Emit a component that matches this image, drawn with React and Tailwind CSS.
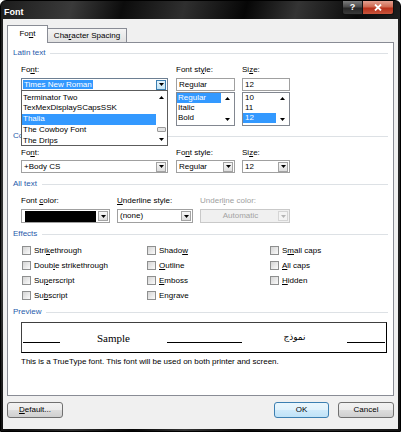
import React from "react";

const Tri = ({ up, color = "#000" }) => (
  <svg width="5" height="3" viewBox="0 0 5 3" className="block">
    <path d={up ? "M0 3h5L2.5 0z" : "M0 0h5L2.5 3z"} fill={color} />
  </svg>
);

const U = ({ children }) => <span className="underline underline-offset-[1px]">{children}</span>;

const DropBtn = ({ kind }) => {
  const cls =
    kind === "active"
      ? "border-[#3c7fb1] bg-[linear-gradient(to_bottom,#e5f4fc,#c4e5f6)]"
      : kind === "disabled"
      ? "border-[#d5d5d5] bg-[#f4f4f4]"
      : "border-[#a3a3a3] bg-[linear-gradient(to_bottom,#f7f7f7,#dedede)]";
  return (
    <div className={`w-[10px] h-[10px] flex items-center justify-center border ${cls}`}>
      <Tri color={kind === "disabled" ? "#b5b5b5" : "#000"} />
    </div>
  );
};

const Header = ({ children }) => (
  <div className="flex items-center h-[12px] pl-[5px] pr-[5px]">
    <span className="text-[#1f5bab] leading-none whitespace-nowrap">{children}</span>
    <div className="flex-1 h-px bg-[#dde1e5] ml-[5px]" />
  </div>
);

const Select = ({ w, children, kind }) => (
  <div
    className={`${w} h-full border flex items-center justify-between pl-[2px] pr-[1px] ${
      kind === "disabled" ? "border-[#c9c9c9] bg-[#f0f0f0]" : "border-[#a0a0a0] bg-white"
    }`}
  >
    {children}
    <DropBtn kind={kind} />
  </div>
);

const Check = ({ children }) => (
  <div className="flex items-center h-[15px] gap-[3px]">
    <div className="w-[9px] h-[9px] border border-[#8e8f8f] bg-[linear-gradient(135deg,#d4d4d4,#fbfbfb)]" />
    <span className="leading-none whitespace-nowrap">{children}</span>
  </div>
);

const Btn = ({ children }) => (
  <div className="w-[56px] h-[16px] rounded-[3px] border border-[#707070] bg-[linear-gradient(to_bottom,#f2f2f2_0%,#ebebeb_50%,#dddddd_51%,#cfcfcf_100%)] flex items-center justify-center leading-none">
    {children}
  </div>
);

const fontItems = ["Terminator Two", "TexMexDisplaySCapsSSK", "Thalia", "The Cowboy Font", "The Drips"];

export default function App() {
  return (
    <div className="w-[404px] h-[442px] bg-white font-['Liberation_Sans',Arial,sans-serif] text-[8px] text-black">
      <div className="w-[401px] h-[432px] flex flex-col border border-black rounded-t-[6px] bg-[linear-gradient(105deg,#1c1c1c_0%,#3a3a3a_14%,#0c0c0c_24%,#2f2f2f_36%,#060606_48%,#343434_58%,#0a0a0a_70%,#2c2c2c_84%,#141414_100%)]">
        {/* Title bar */}
        <div className="h-[18px] flex items-start justify-between">
          <div className="pl-[3px] pt-[7px] text-white font-bold text-[9px] leading-none">Font</div>
          <div className="flex mr-[6px] rounded-b-[3px] border border-t-0 border-[#111] overflow-hidden">
            <div className="w-[20px] h-[13px] flex items-center justify-center text-white font-bold text-[9px] leading-none bg-[linear-gradient(to_bottom,#7b7b7b_0%,#4a4a4a_45%,#262626_55%,#3a3a3a_100%)] border-r border-[#111]">
              ?
            </div>
            <div className="w-[30px] h-[13px] flex items-center justify-center bg-[linear-gradient(to_bottom,#e3a090_0%,#cf6a52_45%,#b8301a_55%,#c8553c_100%)]">
              <svg width="8" height="7" viewBox="0 0 8 7">
                <path d="M1 0.5L7 6.5M7 0.5L1 6.5" stroke="#fff" strokeWidth="1.8" />
              </svg>
            </div>
          </div>
        </div>

        {/* Body */}
        <div className="flex-1 mx-[2px] mb-[2px] bg-[#f0f0f0] flex flex-col px-[4px] pt-[6px]">
          {/* Tabs */}
          <div className="h-[17px] flex items-start">
            <div className="relative z-10 w-[41px] h-[18px] bg-white border border-b-0 border-[#898c95] flex items-center justify-center leading-none pb-[1px]">
              Fo<U>n</U>t
            </div>
            <div className="mt-[3px] w-[79px] h-[14px] border border-b-0 border-l-0 border-[#898c95] bg-[linear-gradient(to_bottom,#f4f4f4,#e1e1e1)] flex items-center justify-center leading-none">
              Cha<U>r</U>acter Spacing
            </div>
          </div>

          {/* Panel */}
          <div className="h-[354px] bg-white border border-[#898c95] flex flex-col pt-[4px]">
            <Header>Latin text</Header>
            <div className="mt-[6px] flex pl-[13px] h-[10px] leading-[10px]">
              <div className="w-[147px]">Fo<U>n</U>t:</div>
              <div className="w-[59px] ml-[8px]">Font st<U>y</U>le:</div>
              <div className="w-[48px] ml-[7px]">Si<U>z</U>e:</div>
            </div>
            <div className="mt-[3px] flex pl-[13px] h-[13px]">
              <div className="relative w-[147px] h-full border border-[#6d7f92] bg-white flex items-center justify-between pl-[1px] pr-[1px]">
                <span className="bg-[#3399ff] text-white leading-[9px] px-[1px]">Times New Roman</span>
                <DropBtn kind="active" />
                <div className="absolute left-[-1px] top-[11px] w-[147px] h-[56px] z-20 border border-[#5c5c5c] bg-white flex overflow-hidden">
                  <div className="flex-1 pt-[1.5px]">
                    {fontItems.map((f) => (
                      <div
                        key={f}
                        className={`h-[10.75px] leading-[10.75px] pl-[1px] whitespace-nowrap ${
                          f === "Thalia" ? "bg-[#3399ff] text-white" : ""
                        }`}
                      >
                        {f}
                      </div>
                    ))}
                  </div>
                  <div className="w-[11px] flex flex-col items-center">
                    <div className="h-[13px] flex items-center justify-center">
                      <Tri up />
                    </div>
                    <div className="h-[23px]" />
                    <div className="w-[9px] h-[5px] border border-[#9a9a9a] bg-[#e4e4e4] rounded-[1px]" />
                    <div className="flex-1" />
                    <div className="h-[12px] flex items-center justify-center">
                      <Tri />
                    </div>
                  </div>
                </div>
              </div>
              <div className="w-[59px] ml-[8px] h-full border border-[#a0a0a0] bg-white flex items-center pl-[2px] leading-none">
                Regular
              </div>
              <div className="w-[48px] ml-[7px] h-full border border-[#a0a0a0] bg-white flex items-center pl-[2px] leading-none">
                12
              </div>
            </div>
            <div className="mt-[1px] flex pl-[13px] h-[34px]">
              <div className="w-[147px]" />
              <div className="w-[59px] ml-[8px] h-full border border-[#828790] bg-white flex">
                <div className="flex-1">
                  <div className="h-[10px] leading-[10px] pl-[1px] bg-[#3399ff] text-white">Regular</div>
                  <div className="h-[10px] leading-[10px] pl-[1px]">Italic</div>
                  <div className="h-[10px] leading-[10px] pl-[1px]">Bold</div>
                </div>
                <div className="w-[13px] flex flex-col justify-between items-center py-[4px]">
                  <Tri up />
                  <Tri />
                </div>
              </div>
              <div className="w-[48px] ml-[7px] h-full border border-[#828790] bg-white flex">
                <div className="flex-1">
                  <div className="h-[10px] leading-[10px] pl-[2px]">10</div>
                  <div className="h-[10px] leading-[10px] pl-[2px]">11</div>
                  <div className="h-[10px] leading-[10px] pl-[2px] bg-[#3399ff] text-white">12</div>
                </div>
                <div className="w-[13px] flex flex-col justify-between items-center py-[4px]">
                  <Tri up />
                  <Tri />
                </div>
              </div>
            </div>

            <div className="mt-[4px]">
              <Header>Complex scripts</Header>
            </div>
            <div className="mt-[6px] flex pl-[13px] h-[10px] leading-[10px]">
              <div className="w-[147px]">Fo<U>n</U>t:</div>
              <div className="w-[59px] ml-[8px]">Fo<U>n</U>t style:</div>
              <div className="w-[48px] ml-[7px]">Si<U>z</U>e:</div>
            </div>
            <div className="mt-[2px] flex pl-[13px] h-[13px]">
              <Select w="w-[147px]">
                <span className="leading-none">+Body CS</span>
              </Select>
              <div className="ml-[8px] h-full">
                <Select w="w-[59px]">
                  <span className="leading-none">Regular</span>
                </Select>
              </div>
              <div className="ml-[7px] h-full">
                <Select w="w-[48px]">
                  <span className="leading-none">12</span>
                </Select>
              </div>
            </div>

            <div className="mt-[5px]">
              <Header>All text</Header>
            </div>
            <div className="mt-[6px] flex pl-[13px] h-[10px] leading-[10px]">
              <div className="w-[89px]">Font <U>c</U>olor:</div>
              <div className="w-[76px] ml-[7px]">
                <U>U</U>nderline style:
              </div>
              <div className="w-[90px] ml-[7px] text-[#a0a0a0]">Underl<U>i</U>ne color:</div>
            </div>
            <div className="mt-[3px] flex pl-[13px] h-[14px]">
              <Select w="w-[89px]">
                <div className="w-[71px] h-[11px] bg-black ml-[1px]" />
              </Select>
              <div className="ml-[7px] h-full">
                <Select w="w-[76px]">
                  <span className="leading-none">(none)</span>
                </Select>
              </div>
              <div className="ml-[7px] h-full">
                <Select w="w-[90px]" kind="disabled">
                  <span className="flex-1 text-center leading-none text-[#a3a3a3]">Automatic</span>
                </Select>
              </div>
            </div>

            <div className="mt-[5px]">
              <Header>Effects</Header>
            </div>
            <div className="mt-[3px] flex pl-[14px]">
              <div className="w-[125px] flex flex-col">
                <Check>
                  Stri<U>k</U>ethrough
                </Check>
                <Check>
                  Doub<U>l</U>e strikethrough
                </Check>
                <Check>
                  Su<U>p</U>erscript
                </Check>
                <Check>
                  Su<U>b</U>script
                </Check>
              </div>
              <div className="w-[123px] flex flex-col">
                <Check>
                  Shado<U>w</U>
                </Check>
                <Check>
                  <U>O</U>utline
                </Check>
                <Check>
                  <U>E</U>mboss
                </Check>
                <Check>
                  En<U>g</U>rave
                </Check>
              </div>
              <div className="flex flex-col">
                <Check>
                  S<U>m</U>all caps
                </Check>
                <Check>
                  <U>A</U>ll caps
                </Check>
                <Check>
                  <U>H</U>idden
                </Check>
              </div>
            </div>

            <div className="mt-[3px]">
              <Header>Preview</Header>
            </div>
            <div className="mt-[4px] ml-[13px] w-[366px] h-[31px] border border-black border-t-[#404040] border-l-[#404040]">
              <div className="h-[20px] flex items-end">
                <div className="w-[37px] h-px bg-black ml-[1px]" />
                <div className="w-[107px] flex justify-center font-['Liberation_Serif',serif] text-[11px] leading-[11px] mb-[-1px]">
                  Sample
                </div>
                <div className="w-[75px] h-px bg-black" />
                <div className="w-[105px] flex justify-center font-['DejaVu_Sans',sans-serif] text-[9px] leading-[10px] mb-[1px]">
                  نموذج
                </div>
                <div className="w-[38px] h-px bg-black" />
              </div>
            </div>
            <div className="mt-[4px] pl-[13px] h-[10px] leading-[10px]">
              This is a TrueType font. This font will be used on both printer and screen.
            </div>
          </div>

          {/* Buttons */}
          <div className="mt-[6px] flex items-start">
            <Btn>
              <U>D</U>efault...
            </Btn>
            <div className="flex-1" />
            <div className="w-[55px] h-[16px] rounded-[3px] border border-[#3c7fb1] bg-[linear-gradient(to_bottom,#eaf6fd_0%,#e0f2fc_50%,#cfeafb_51%,#bfe2f7_100%)] flex items-center justify-center leading-none">
              OK
            </div>
            <div className="ml-[9px]">
              <Btn>Cancel</Btn>
            </div>
          </div>
        </div>
      </div>
    </div>
  );
}
